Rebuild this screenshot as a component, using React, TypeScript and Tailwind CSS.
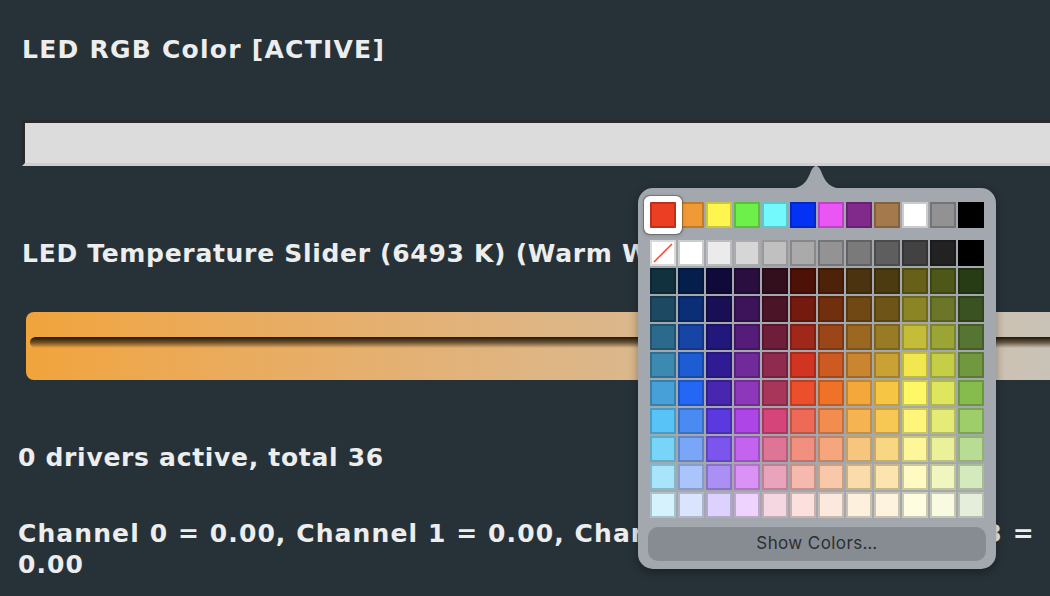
const TOP_ROW = [
  'bg-[#eb3e23]',
  'bg-[#f09a35]',
  'bg-[#fef54e]',
  'bg-[#6ef04a]',
  'bg-[#73f8fc]',
  'bg-[#0332f5]',
  'bg-[#eb55f6]',
  'bg-[#822a8c]',
  'bg-[#a47a4c]',
  'bg-[#ffffff]',
  'bg-[#929292]',
  'bg-[#000000]',
];

const GRAY_ROW = [
  'bg-[#ffffff]',
  'bg-[#ebebeb]',
  'bg-[#d6d6d6]',
  'bg-[#c0c0c0]',
  'bg-[#aaaaaa]',
  'bg-[#939393]',
  'bg-[#7a7a7a]',
  'bg-[#5e5e5e]',
  'bg-[#424242]',
  'bg-[#222222]',
  'bg-[#000000]',
];

const PALETTE = [
  ['bg-[#12313f]', 'bg-[#051e4c]', 'bg-[#0f0a3a]', 'bg-[#2a0e3f]', 'bg-[#330e1d]', 'bg-[#4d1107]', 'bg-[#4e2109]', 'bg-[#4b3310]', 'bg-[#4c3b10]', 'bg-[#666018]', 'bg-[#4c5718]', 'bg-[#273c14]'],
  ['bg-[#1d4a62]', 'bg-[#0b2f77]', 'bg-[#190f54]', 'bg-[#3d1459]', 'bg-[#4c1527]', 'bg-[#751a0e]', 'bg-[#712f0e]', 'bg-[#6f4814]', 'bg-[#6e5417]', 'bg-[#8c8525]', 'bg-[#6c7628]', 'bg-[#3a5222]'],
  ['bg-[#2b6a8b]', 'bg-[#1645a6]', 'bg-[#22177a]', 'bg-[#551c79]', 'bg-[#6e1d3b]', 'bg-[#a0281a]', 'bg-[#9c4519]', 'bg-[#9b6822]', 'bg-[#9a7b25]', 'bg-[#c5bc3a]', 'bg-[#9aa535]', 'bg-[#567532]'],
  ['bg-[#3c89b2]', 'bg-[#1d5dd3]', 'bg-[#2f1c95]', 'bg-[#702a9a]', 'bg-[#8e2b4f]', 'bg-[#d13521]', 'bg-[#cc5a21]', 'bg-[#c9852f]', 'bg-[#caa134]', 'bg-[#f2e74e]', 'bg-[#c4ce47]', 'bg-[#72983f]'],
  ['bg-[#47a0d8]', 'bg-[#2467f5]', 'bg-[#4726b0]', 'bg-[#8d38ba]', 'bg-[#a8365b]', 'bg-[#ec4f2c]', 'bg-[#f07229]', 'bg-[#f4a73a]', 'bg-[#f6c543]', 'bg-[#fef766]', 'bg-[#dde65e]', 'bg-[#86bb4e]'],
  ['bg-[#57c3f6]', 'bg-[#4a8bf3]', 'bg-[#5a39df]', 'bg-[#ae46e7]', 'bg-[#d6457a]', 'bg-[#ee6a57]', 'bg-[#f28c4f]', 'bg-[#f5b352]', 'bg-[#f8c855]', 'bg-[#fef57a]', 'bg-[#e5eb77]', 'bg-[#9dce69]'],
  ['bg-[#78d5f7]', 'bg-[#7aa6f7]', 'bg-[#7c55ef]', 'bg-[#c563f1]', 'bg-[#df7596]', 'bg-[#f2907f]', 'bg-[#f5a67d]', 'bg-[#f7c67e]', 'bg-[#f9d682]', 'bg-[#fef79a]', 'bg-[#ebf09a]', 'bg-[#b8dc93]'],
  ['bg-[#a8e5fa]', 'bg-[#a9c5fb]', 'bg-[#ab8ff4]', 'bg-[#db92f6]', 'bg-[#e9a4bb]', 'bg-[#f6b9ae]', 'bg-[#f8c8a9]', 'bg-[#fadcab]', 'bg-[#fbe4ae]', 'bg-[#fefac2]', 'bg-[#f1f6c0]', 'bg-[#d4e9bd]'],
  ['bg-[#d6f3fd]', 'bg-[#dae5fd]', 'bg-[#ddd2fd]', 'bg-[#edd3fd]', 'bg-[#f5d7e2]', 'bg-[#fbe0dd]', 'bg-[#fce9dd]', 'bg-[#fdf1de]', 'bg-[#fdf3de]', 'bg-[#fefde2]', 'bg-[#f8fae2]', 'bg-[#e5eedb]'],
];

function Swatch({ color, selected }: { color: string; selected?: boolean }) {
  if (selected) {
    return (
      <div className="relative z-10 h-[26px] w-[26px] rounded-[2px] shadow-[0_0_0_6px_#ffffff,0_0_0_7px_rgba(0,0,0,0.25),0_1px_4px_7px_rgba(0,0,0,0.15)]">
        <div className={`h-full w-full rounded-[1px] border-2 border-black/20 ${color}`} />
      </div>
    );
  }
  return <div className={`h-[26px] w-[26px] border-2 border-black/20 ${color}`} />;
}

function ColorPopover() {
  return (
    <div className="absolute left-[638px] top-[188px] w-[358px] rounded-[15px] bg-[#a2a8ad] px-[10px] pb-[8px] pt-[14px] shadow-[0_3px_10px_rgba(0,0,0,0.35)]">
      <svg className="absolute left-[146px] top-[-25px]" width="64" height="26" viewBox="0 0 64 26">
        <path d="M0 26 C16 26 22 22 27 8 Q32 -2 37 8 C42 22 48 26 64 26 Z" fill="#a2a8ad" />
      </svg>
      <div className="flex gap-[2px] px-[2px]">
        {TOP_ROW.map((c, i) => (
          <Swatch key={i} color={c} selected={i === 0} />
        ))}
      </div>
      <div className="mt-[12px] flex flex-col gap-[2px] px-[2px]">
        <div className="flex gap-[2px]">
          <div className="h-[26px] w-[26px] border-2 border-black/15 bg-white">
            <svg width="22" height="22" viewBox="0 0 22 22">
              <line x1="2" y1="20" x2="20" y2="2" stroke="#f0503a" strokeWidth="1.6" />
            </svg>
          </div>
          {GRAY_ROW.map((c, i) => (
            <Swatch key={i} color={c} />
          ))}
        </div>
        {PALETTE.map((row, r) => (
          <div key={r} className="flex gap-[2px]">
            {row.map((c, i) => (
              <Swatch key={i} color={c} />
            ))}
          </div>
        ))}
      </div>
      <button className="mt-[9px] flex h-[34px] w-full items-center justify-center rounded-[10px] bg-[#878c92] font-['Inter'] text-[17px] font-normal tracking-[0.4px] text-[#2b2f33]">
        Show Colors…
      </button>
    </div>
  );
}

export default function App() {
  return (
    <div className="relative h-[596px] w-[1050px] overflow-hidden bg-[#263238] pl-[18px] font-['DejaVu_Sans'] text-[25px] font-bold text-[#ededed]">
      <h2 className="mt-[35px] pl-[4px] leading-[29px] tracking-[1.25px]">LED RGB Color [ACTIVE]</h2>
      <div className="ml-[4px] mt-[56px] h-[46px] w-[1060px] border-[3px] border-b-[#cfcfcf] border-l-[#2a2a2a] border-r-[#cfcfcf] border-t-[#2a2a2a] bg-[#dcdcdc]" />

      <h2 className="mt-[73px] whitespace-nowrap pl-[4px] leading-[29px] tracking-[0.7px]">
        LED Temperature Slider (6493 K) (Warm White)
      </h2>
      <div className="ml-[8px] mt-[44px] h-[68px] w-[1040px] rounded-[8px] bg-gradient-to-r from-[#f1a43b] to-[#c9c3b9] pl-[4px] pt-[25px]">
        <div className="h-[11px] rounded-l-full bg-gradient-to-b from-[#20170b] via-[#3a2a14]/70 to-transparent" />
      </div>

      <p className="mt-[63px] leading-[29px] tracking-[0.7px]">0 drivers active, total 36</p>
      <p className="mt-[46px] leading-[31px] tracking-[1.1px]">
        Channel 0 = 0.00, Channel 1 = 0.00, Channel 2 = 0.00, Channel 3 = 0.00
      </p>

      <ColorPopover />
    </div>
  );
}
